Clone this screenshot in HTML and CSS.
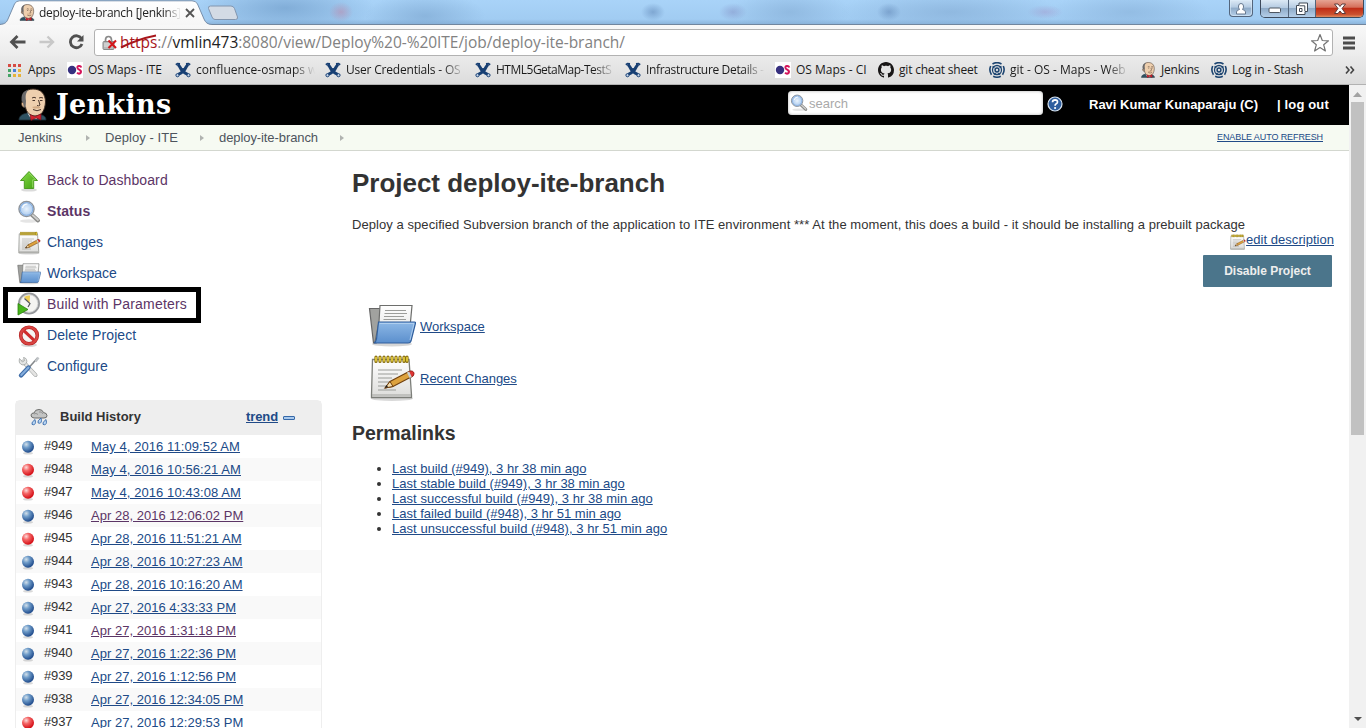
FILE: index.html
```html
<!DOCTYPE html>
<html lang="en">
<head>
<meta charset="utf-8">
<title>deploy-ite-branch [Jenkins]</title>
<link rel="stylesheet" href="styles.css">
</head>
<body>
<svg class="defs" width="0" height="0">
  <defs>
    <linearGradient id="gTab" x1="0" y1="0" x2="0" y2="1"><stop offset="0" stop-color="#fff"/><stop offset="1" stop-color="#f6f6f6"/></linearGradient>
    <radialGradient id="gBlue" cx=".35" cy=".3" r=".7"><stop offset="0" stop-color="#d3e0ea"/><stop offset=".4" stop-color="#6f9cc9"/><stop offset="1" stop-color="#1f4b8c"/></radialGradient>
    <radialGradient id="gRed" cx=".35" cy=".3" r=".7"><stop offset="0" stop-color="#fbdcdc"/><stop offset=".4" stop-color="#f46666"/><stop offset="1" stop-color="#d40c14"/></radialGradient>
    <radialGradient id="gLens"><stop offset="0" stop-color="#e9f3fd"/><stop offset="1" stop-color="#a3c5ec"/></radialGradient>
    <linearGradient id="gGreen" x1="0" y1="0" x2="1" y2="1"><stop offset="0" stop-color="#8ade4a"/><stop offset="1" stop-color="#3f9f10"/></linearGradient>
    <linearGradient id="gFolder" x1="0" y1="0" x2="0" y2="1"><stop offset="0" stop-color="#8db8e6"/><stop offset="1" stop-color="#5b8fcd"/></linearGradient>
    <linearGradient id="gPaper" x1="0" y1="0" x2="0" y2="1"><stop offset="0" stop-color="#fff"/><stop offset="1" stop-color="#dcdcda"/></linearGradient>
  </defs>
  <symbol id="butler" viewBox="0 0 29 33">
    <path d="M1 32C1 28 4 26 9 25L20 26C25 27 28 28 28 32Z" fill="#2f5262" stroke="#1a2b33" stroke-width=".8"/>
    <path d="M9 24L13 31H19L21 24Z" fill="#fff"/>
    <path d="M5 14C3 6 8 1 15 1C23 1 27.500 6 27.500 14C27 22 24 28 17 28C12 28 8 24 7.500 19C5 19 3.500 16 5 14Z" fill="#eecfae" stroke="#3a2a20"/>
    <path d="M4 15C2.500 6 5 3 11 1.500C8 4 7 7 8 13L7.500 20C5 19 3.500 18 4 15Z" fill="#6b6a6b"/>
    <path d="M5 14.500C3 13 2.500 18 6 19.500" fill="#e0b890" stroke="#3a2a20" stroke-width=".7"/>
    <path d="M14 10q2-1.500 4 0M21 10q2-1 4 0M14.500 12.500h2.500M22 12.500h2.500M20.500 12l1.500 5q-1.500 1.500-3 .5M15 21.500q4 2.500 8 0" fill="none" stroke="#49352b"/>
    <path d="M14 19q4.500-1.500 9 0l-2 1.500h-5Z" fill="#d2ab85"/>
    <path d="M12 26.500L17 28.500L23 26V32L18 30L13 32.500Z" fill="#d4232e" stroke="#701018" stroke-width=".7"/>
  </symbol>
  <symbol id="glass" viewBox="0 0 24 24">
    <ellipse cx="12" cy="21" rx="9" ry="1.800" fill="#000" opacity=".1"/>
    <path d="M14.500 14.500L21 20.500" stroke="#8a8a88" stroke-width="4" stroke-linecap="round"/>
    <path d="M15.500 15L21 20" stroke="#cfcfcd" stroke-width="1.800" stroke-linecap="round"/>
    <circle cx="9.500" cy="9" r="7.600" fill="url(#gLens)" stroke="#8d9298" stroke-width="1.300"/>
    <circle cx="9.500" cy="9" r="6.300" fill="none" stroke="#86aee0" stroke-width="1"/>
    <path d="M5.500 8q1-4 5-4" fill="none" stroke="#fff" stroke-width="1.200"/>
  </symbol>
  <symbol id="notepad" viewBox="0 0 48 48">
    <ellipse cx="24" cy="44.500" rx="21" ry="2.500" fill="#000" opacity=".15"/>
    <path d="M4.500 5.500H41L43.500 41V43.500H3.500V41Z" fill="url(#gPaper)" stroke="#7c7e79" stroke-width="1.300"/>
    <path d="M4 41H43" stroke="#a2a39f"/>
    <path d="M10 16H34M10 20H30M10 24H24M10 28H30M10 32H22M10 36H28" stroke="#9a9b98" stroke-width="1.100"/>
    <path d="M8 3V7.500M12 3V7.500M16 3V7.500M20 3V7.500M24 3V7.500M28 3V7.500M32 3V7.500M36 3V7.500M39 3V7.500" stroke="#8a7010" stroke-width="3.200" stroke-linecap="round"/>
    <path d="M8 3.500V7M12 3.500V7M16 3.500V7M20 3.500V7M24 3.500V7M28 3.500V7M32 3.500V7M36 3.500V7M39 3.500V7" stroke="#edd540" stroke-width="1.600" stroke-linecap="round"/>
    <path d="M17 34L22 27.500L41 17.500C45 16.500 47 20 44 22.500L25 32.500Z" fill="#dda23e" stroke="#70400e" stroke-width="1.100"/>
    <path d="M17 34L22 27.500L25 32.500Z" fill="#f5deb0" stroke="#70400e"/>
    <path d="M17 34l3-1-1.500-2Z" fill="#222"/>
    <path d="M41 17.500C45 15.500 48 19.500 44.500 22.300L43 23Z" fill="#df3433" stroke="#951919" stroke-width=".8"/>
    <path d="M39 18.500l2.200-1.100 2.600 5.500-2.200 1.100Z" fill="#ccd0d1"/>
  </symbol>
  <symbol id="folder" viewBox="0 0 48 48">
    <ellipse cx="24" cy="42" rx="20" ry="2.500" fill="#000" opacity=".16"/>
    <path d="M1.500 6.500H12L14 9H34V30L8 41H5.500Z" fill="#a1a29f" stroke="#666" stroke-width="1.200"/>
    <path d="M12 3.500H44L42 25L30 40H7L11 20Z" fill="url(#gPaper)" stroke="#6d6e6c" stroke-width="1.200"/>
    <path d="M17 8.500H38M16.500 11.500H39M16 14.500H36M15.500 17.500H38" stroke="#9c9d9a" stroke-width="1.100"/>
    <path d="M10.500 20H46.500C47.500 20 47.600 20.500 47.400 21.500L43 39Q42.500 41 40 41H6Q8 40 8.500 37Z" fill="url(#gFolder)" stroke="#315f9d" stroke-width="1.200"/>
    <path d="M11.800 21.500H46L42 38" fill="none" stroke="#b9d4f0" stroke-width=".8"/>
  </symbol>
  <symbol id="up" viewBox="0 0 24 24">
    <ellipse cx="12" cy="21" rx="8" ry="1.600" fill="#000" opacity=".14"/>
    <path d="M12 2.500L20.500 11.500H16.700V19.500H7.300V11.500H3.500Z" fill="url(#gGreen)" stroke="#4c9c22" stroke-linejoin="round"/>
    <path d="M12 4L18.500 10.800H15.700V18.500" fill="none" stroke="#a7e67a" stroke-width=".7"/>
  </symbol>
  <symbol id="clock" viewBox="0 0 24 24">
    <circle cx="12" cy="11.500" r="10" fill="#f4f4f2" stroke="#96989c" stroke-width="2"/>
    <circle cx="12" cy="11.500" r="8.800" fill="none" stroke="#d0d2d4" stroke-width=".9"/>
    <path d="M12.500 11.500L7 5Q9.500 3 13 3.500Z" fill="#ebcc55"/>
    <path d="M7.500 6.500L13 11.500L11 15" fill="none" stroke="#54575b" stroke-width="1.200"/>
    <path d="M1 11.500L11 17.500L1 23Z" fill="#47b51c" stroke="#2c820e" stroke-width=".8"/>
  </symbol>
  <symbol id="stop" viewBox="0 0 24 24">
    <ellipse cx="12" cy="21" rx="8" ry="2" fill="#000" opacity=".15"/>
    <circle cx="12" cy="11.500" r="8.300" fill="#f5f4f2" stroke="#b52525" stroke-width="3.600"/>
    <path d="M6 5.800L18 17.200" stroke="#cf2c2c" stroke-width="3.200"/>
    <circle cx="12" cy="11.500" r="8.300" fill="none" stroke="#d94442" stroke-width="2.200"/>
  </symbol>
  <symbol id="tools" viewBox="0 0 24 24">
    <path d="M6 6.500L18.500 20" stroke="#a0a3a2" stroke-width="4" stroke-linecap="round"/>
    <path d="M6 6.500L18.500 20" stroke="#e4e4e3" stroke-width="2.600" stroke-linecap="round"/>
    <path d="M2.500 3.500Q1 9 6 10Q11 9 9.500 4.500Q8.500 2.500 6.500 2.500L7.500 5.500L5.500 7Z" fill="#e4e5e4" stroke="#a0a3a2" stroke-width=".8"/>
    <path d="M20.500 3L12 12.500" stroke="#85898c" stroke-width="1.600"/>
    <path d="M21.500 2.500L18.500 6.500" stroke="#c0c4c7" stroke-width="2.400"/>
    <path d="M11.500 12.500L4 20.500" stroke="#3f6da8" stroke-width="4.400" stroke-linecap="round"/>
    <path d="M11.500 12.500L4.300 20" stroke="#85aedd" stroke-width="2" stroke-linecap="round"/>
  </symbol>
  <symbol id="rain" viewBox="0 0 18 18">
    <path d="M4 10Q.8 9.500 1 7Q1.500 4.800 4 5Q5 1.300 9 1.500Q12.500 1.500 13.500 4.500Q17 5 17 7.700Q17 10 14 10Z" fill="#c3c4c3" stroke="#6c6d6b"/>
    <path d="M4 6q2-1.500 4 .5M9 4q3-1 4 2" fill="none" stroke="#888" stroke-width=".8"/>
    <g fill="#b8d5f2" stroke="#3569aa" stroke-width=".9"><path d="M5 11.500q-4 3-3 4.800q3 1.500 3.500-2z"/><path d="M11 10q-4 3-3 4.800q3 1.500 3.500-2z"/><path d="M16 11.500q-4 3-3 4.800q3 1.500 3.500-2z"/></g>
  </symbol>
  <symbol id="ball-b" viewBox="0 0 14 15"><ellipse cx="7" cy="13.300" rx="5" ry="1.200" opacity=".15"/><circle cx="7" cy="6.800" r="6" fill="url(#gBlue)"/></symbol>
  <symbol id="ball-r" viewBox="0 0 14 15"><ellipse cx="7" cy="13.300" rx="5" ry="1.200" opacity=".15"/><circle cx="7" cy="6.800" r="6" fill="url(#gRed)"/></symbol>
  <symbol id="os" viewBox="0 0 16 16"><path fill="#fff" d="M0 0h16v16H0z"/><circle cx="5" cy="8" r="4.200" fill="#37307f"/><path d="M14.300 5.500Q13.700 3.800 12 4Q10 4.300 10.500 6Q11 7.300 12.500 7.800Q14.600 8.800 13.700 10.800Q12 12.500 10 10.800" fill="none" stroke="#d4145a" stroke-width="2"/></symbol>
  <symbol id="conf" viewBox="0 0 16 16"><path d="M3 2.500Q4.500 4 6 7T13 12.500M13 2.500Q11.500 4 10 7T3 12.500" fill="none" stroke="#173f73" stroke-width="3"/><path d="M.8 2.700L2.500 1.700L5 2M15.200 2.700L13.500 1.700L11 2" fill="none" stroke="#173f73" stroke-width="1.800"/><path d="M5.500 5q2.500 2.500 5 0L9.500 10H6.500z" fill="#173f73"/><circle cx="2.500" cy="13.200" r="1.600" fill="#c4d4e8" stroke="#173f73"/><circle cx="13.500" cy="13.200" r="1.600" fill="#c4d4e8" stroke="#173f73"/></symbol>
  <symbol id="git" viewBox="0 0 16 16"><path fill="#181616" fill-rule="evenodd" d="M8 0C3.580 0 0 3.580 0 8c0 3.540 2.290 6.530 5.470 7.590.4.070.55-.17.55-.38 0-.19-.01-.82-.01-1.490-2.010.37-2.530-.49-2.690-.94-.09-.23-.48-.94-.82-1.130-.28-.15-.68-.52-.01-.53.630-.01 1.080.58 1.230.82.720 1.210 1.870.87 2.330.66.070-.52.280-.87.510-1.070-1.780-.2-3.640-.89-3.640-3.950 0-.87.310-1.590.82-2.150-.08-.2-.36-1.020.08-2.120 0 0 .67-.21 2.200.82.640-.18 1.320-.27 2-.27s1.360.09 2 .27c1.530-1.040 2.200-.82 2.200-.82.440 1.100.16 1.920.08 2.120.51.560.82 1.270.82 2.150 0 3.070-1.870 3.750-3.650 3.950.29.250.54.730.54 1.480 0 1.070-.01 1.930-.01 2.200 0 .21.150.46.550.38A8.010 8.010 0 0 0 16 8c0-4.420-3.580-8-8-8z"/></symbol>
  <symbol id="stash" viewBox="0 0 16 16"><g fill="none" stroke="#1c4470" stroke-width="1.600"><path d="M3.500 2Q8-.8 12.500 2M14.300 4Q16.300 8.500 13.500 12.700M11.800 14.200Q8 16.200 4.200 14.200M2.500 12.700Q-.3 8.500 1.700 4"/><circle cx="8" cy="8" r="4.500" stroke-width="1.300"/><circle cx="8" cy="8" r="1.900" stroke-width="1.500"/><path d="M3.500 4.500L5.500 5.500M12.500 4.500L10.500 5.500M5 12.500L6.500 11M11 12.500L9.500 11"/></g></symbol>
</svg>

<div class="titlebar">
  <div class="tab">
    <svg class="tab-shape" width="214" height="25"><path d="M0 25V24.500C5 24 6.500 22.500 8 19L14.500 4Q16 .8 19.500.8H192Q196 .8 197.500 4L204 19Q206 24.500 212 24.500V25Z" fill="url(#gTab)"/><path d="M0 24.500C5 24 6.500 22.500 8 19L14.500 4Q16 .8 19.500.8H192Q196 .8 197.500 4L204 19Q206 24.500 212 24.500" fill="none" stroke="#6d84a0" stroke-width=".9"/></svg>
    <svg class="fav" width="16" height="17"><use href="#butler"/></svg>
    <span class="tab-title">deploy-ite-branch [Jenkins]</span>
    <svg class="tab-x" width="10" height="10"><path d="M1 1L9 9M9 1L1 9" stroke="#555" stroke-width="1.800"/></svg>
  </div>
  <svg class="newtab" width="33" height="16"><path d="M4.500 1H25Q27.500 1 28.500 3.500L31.500 12Q32 14.500 29.500 14.500H9Q7 14.500 6 12L2.500 3.500Q2 1 4.500 1Z" fill="#d3dbe5" stroke="#8296af"/></svg>
  <div class="win">
    <div class="wbtn user"><svg width="12" height="13"><path d="M1.500 12V10Q1.500 8 4.500 7.500Q3.300 6 3.500 4Q3.800 1.500 6 1.500Q8.300 1.500 8.500 4Q8.700 6 7.500 7.500Q10.500 8 10.500 10V12Z" fill="#fff" stroke="#66788f"/></svg></div>
    <div class="wgroup">
      <div class="wbtn min"><svg width="14" height="8"><rect x="1" y="2" width="11.500" height="4.500" rx="1" fill="#fff" stroke="#4e5661"/></svg></div>
      <div class="wbtn max"><svg width="14" height="14"><path d="M4 1H12.500V9.500H10V12.500H1.500V3.500H4Z" fill="#fff" stroke="#414a56"/><path d="M9.800 9V3.800H4.500M4.500 6.500h2.500v3H4.500z" fill="none" stroke="#414a56"/></svg></div>
      <div class="wbtn close"><svg width="14" height="12"><path d="M1.500 1H5L7 3.500L9 1H12.500L9 5.500L12.500 10.500H9L7 8L5 10.500H1.500L5 5.500Z" fill="#fff" stroke="#5c3a3a"/></svg></div>
    </div>
  </div>
</div>

<div class="toolbar">
  <svg class="nav" width="80" height="16"><g fill="none" stroke-width="2.800"><path d="M16.500 8H3M8.500 2L2.500 8L8.500 14" stroke="#505050"/><path d="M30.500 8H44M38.500 2.500L44 8L38.500 13.500" stroke="#c8c8c8" stroke-width="2.400"/><path d="M72.500 4.500A6 6 0 1 0 73 10" stroke="#505050"/></g><path d="M74.500 1V7.500H68Z" fill="#505050"/></svg>
  <div class="omni">
    <svg class="lock" width="16" height="16"><path d="M3.500 7V5Q3.500 1.500 6.500 1.500Q9.500 1.500 9.500 5V7" fill="none" stroke="#8a8a8a" stroke-width="1.700"/><rect x="1" y="6.500" width="11" height="8" rx="1" fill="#b9b9b9" stroke="#888"/><path d="M2 9h8M2 11h8" stroke="#e5e5e5"/><path d="M6.500 5.500L14 13M14 5.500L6.500 13" stroke="#d3171b" stroke-width="2.100"/></svg>
    <span class="url"><span class="https">https<svg width="38" height="15"><path d="M1 13.500Q18 5 36 1.500" stroke="#a8161b" stroke-width="2" fill="none"/></svg></span>://<b>vmlin473</b>:8080/view/Deploy%20-%20ITE/job/deploy-ite-branch/</span>
    <svg class="star" width="20" height="20"><path d="M10 1.500L12.300 7.500L18.500 7.800L13.700 11.800L15.400 18L10 14.500L4.600 18L6.300 11.800L1.500 7.800L7.700 7.500Z" fill="#fff" stroke="#747474" stroke-width="1.200" stroke-linejoin="round"/></svg>
  </div>
  <svg class="menu" width="14" height="14"><path d="M1 2H13M1 7H13M1 12H13" stroke="#4c4c4c" stroke-width="3"/></svg>
</div>

<div class="bookmarks">
  <span class="bm tight"><svg width="14" height="14"><g><path fill="#d64b43" d="M0 0h3v3H0zM5 0h3v3H5zM10 0h3v3h-3z"/><path fill="#45a466" d="M0 5h3v3H0zM0 10h3v3H0z"/><path fill="#477fd8" d="M5 5h3v3H5z"/><path fill="#e6b33b" d="M10 5h3v3h-3zM5 10h3v3H5zM10 10h3v3h-3z"/></g></svg>Apps</span>
  <span class="bm tight"><svg><use href="#os"/></svg>OS Maps - ITE</span>
  <span class="bm"><svg><use href="#conf"/></svg><span class="clip">confluence-osmaps w</span></span>
  <span class="bm tight"><svg><use href="#conf"/></svg><span class="clip">User Credentials - OS</span></span>
  <span class="bm tighter"><svg><use href="#conf"/></svg><span class="clip">HTML5GetaMap-TestS</span></span>
  <span class="bm tight3"><svg><use href="#conf"/></svg><span class="clip">Infrastructure Details -</span></span>
  <span class="bm"><svg><use href="#os"/></svg>OS Maps - CI</span>
  <span class="bm tight"><svg><use href="#git"/></svg>git cheat sheet</span>
  <span class="bm"><svg><use href="#stash"/></svg><span class="clip">git - OS - Maps - Web</span></span>
  <span class="bm tight"><svg><use href="#butler"/></svg>Jenkins</span>
  <span class="bm tight"><svg><use href="#stash"/></svg>Log in - Stash</span>
  <svg class="more" width="10" height="8"><path d="M1 .5L4 4L1 7.500M5.500 .5L8.500 4L5.500 7.500" fill="none" stroke="#444" stroke-width="1.600"/></svg>
</div>

<div class="view">
  <div class="page">
    <header class="head">
      <svg class="logo" width="29" height="33"><use href="#butler"/></svg>
      <span class="brand">Jenkins</span>
      <div class="search"><svg width="18" height="18"><use href="#glass"/></svg><span>search</span></div>
      <svg class="help" width="16" height="16"><circle cx="8" cy="8" r="7" fill="#2f5f9f" stroke="#d9e5f2" stroke-width="1.200"/><path d="M5.500 6.300Q5.600 3.900 8.100 3.900Q10.500 4 10.500 6Q10.500 7.300 9 8Q8.100 8.500 8.100 9.700" fill="none" stroke="#fff" stroke-width="1.700"/><circle cx="8.100" cy="12" r="1.100" fill="#fff"/></svg>
      <b class="who">Ravi Kumar Kunaparaju (C)</b>
      <b class="out">| log out</b>
    </header>
    <nav class="crumbs">
      <span class="c1">Jenkins</span><i></i><span class="c2">Deploy - ITE</span><i></i><span class="c3">deploy-ite-branch</span><i></i>
      <a class="auto">ENABLE AUTO REFRESH</a>
    </nav>
    <div class="cols">
      <aside class="side">
        <ul class="tasks">
          <li class="v"><svg><use href="#up"/></svg>Back to Dashboard</li>
          <li class="v on"><svg><use href="#glass"/></svg>Status</li>
          <li class="plain"><svg><use href="#notepad"/></svg>Changes</li>
          <li class="plain"><svg><use href="#folder"/></svg>Workspace</li>
          <li class="v boxed"><svg><use href="#clock"/></svg>Build with Parameters</li>
          <li><svg><use href="#stop"/></svg>Delete Project</li>
          <li class="plain"><svg><use href="#tools"/></svg>Configure</li>
        </ul>
        <section class="history">
          <div class="hist-head"><svg width="18" height="18"><use href="#rain"/></svg><b class="ht">Build History</b><a class="trend">trend</a><i class="minus"></i></div>
          <div class="row may"><svg><use href="#ball-b"/></svg><span>#949</span><a>May 4, 2016 11:09:52 AM</a></div>
          <div class="row may"><svg><use href="#ball-r"/></svg><span>#948</span><a>May 4, 2016 10:56:21 AM</a></div>
          <div class="row may"><svg><use href="#ball-r"/></svg><span>#947</span><a>May 4, 2016 10:43:08 AM</a></div>
          <div class="row"><svg><use href="#ball-b"/></svg><span>#946</span><a class="v">Apr 28, 2016 12:06:02 PM</a></div>
          <div class="row"><svg><use href="#ball-r"/></svg><span>#945</span><a>Apr 28, 2016 11:51:21 AM</a></div>
          <div class="row"><svg><use href="#ball-b"/></svg><span>#944</span><a>Apr 28, 2016 10:27:23 AM</a></div>
          <div class="row"><svg><use href="#ball-b"/></svg><span>#943</span><a>Apr 28, 2016 10:16:20 AM</a></div>
          <div class="row"><svg><use href="#ball-b"/></svg><span>#942</span><a>Apr 27, 2016 4:33:33 PM</a></div>
          <div class="row"><svg><use href="#ball-b"/></svg><span>#941</span><a class="v">Apr 27, 2016 1:31:18 PM</a></div>
          <div class="row"><svg><use href="#ball-b"/></svg><span>#940</span><a>Apr 27, 2016 1:22:36 PM</a></div>
          <div class="row"><svg><use href="#ball-b"/></svg><span>#939</span><a>Apr 27, 2016 1:12:56 PM</a></div>
          <div class="row"><svg><use href="#ball-b"/></svg><span>#938</span><a>Apr 27, 2016 12:34:05 PM</a></div>
          <div class="row"><svg><use href="#ball-r"/></svg><span>#937</span><a>Apr 27, 2016 12:29:53 PM</a></div>
        </section>
      </aside>
      <main class="main">
        <h1>Project deploy-ite-branch</h1>
        <p class="desc">Deploy a specified Subversion branch of the application to ITE environment *** At the moment, this does a build - it should be installing a prebuilt package</p>
        <div class="edit"><svg width="16" height="16" viewBox="2 0 46 46"><use href="#notepad" width="48" height="48"/></svg><a>edit description</a></div>
        <div class="actions"><span class="btn">Disable Project</span></div>
        <div class="big"><svg width="48" height="48"><use href="#folder"/></svg><a>Workspace</a></div>
        <div class="big"><svg width="48" height="48"><use href="#notepad"/></svg><a>Recent Changes</a></div>
        <h2>Permalinks</h2>
        <ul class="perma">
          <li><a>Last build (#949), 3 hr 38 min ago</a></li>
          <li><a>Last stable build (#949), 3 hr 38 min ago</a></li>
          <li><a class="wide">Last successful build (#949), 3 hr 38 min ago</a></li>
          <li><a>Last failed build (#948), 3 hr 51 min ago</a></li>
          <li><a class="wide">Last unsuccessful build (#948), 3 hr 51 min ago</a></li>
        </ul>
      </main>
    </div>
  </div>
  <div class="scroll"><svg class="su" width="9" height="5"><path d="M0 5L4.500 0L9 5Z" fill="#a3a3a3"/></svg><div class="thumb"></div><svg class="sd" width="8" height="4"><path d="M0 0H8L4 4Z" fill="#505050"/></svg></div>
</div>
</body>
</html>
```
FILE: styles.css
```css
* { box-sizing: border-box; }
body { margin: 0; width: 1366px; height: 728px; overflow: hidden; display: flex; flex-direction: column; background: #fff; font: 13px/15px "Liberation Sans", Arial, sans-serif; color: #333; }
svg { display: block; flex: none; }
.defs { position: absolute; }
a { color: #204a87; text-decoration: underline; }
ul { list-style: none; margin: 0; padding: 0; }

.titlebar { height: 25px; flex: none; display: flex; border-bottom: 1px solid #71869e;
  background:
    radial-gradient(ellipse 12px 10px at 341px 12px, #b98fb299, transparent),
    radial-gradient(ellipse 90px 26px at 285px 8px, #6f9cc9aa, transparent),
    radial-gradient(ellipse 60px 24px at 425px 16px, #7fa9d2aa, transparent),
    radial-gradient(ellipse 12px 9px at 653px 12px, #6c93c1aa, transparent),
    radial-gradient(ellipse 14px 9px at 733px 12px, #8b9fd0aa, transparent),
    radial-gradient(ellipse 60px 24px at 790px 12px, #84acd499, transparent),
    radial-gradient(ellipse 12px 9px at 889px 12px, #6c93c1aa, transparent),
    radial-gradient(ellipse 110px 24px at 950px 12px, #86aed6aa, transparent),
    radial-gradient(ellipse 18px 7px at 1045px 12px, #a6a8d8aa, transparent),
    radial-gradient(ellipse 80px 22px at 1130px 12px, #8bb4dcaa, transparent),
    linear-gradient(#a9d3f8, #a1ccf2 80%, #8cb5dc); }
.tab { position: relative; width: 205px; height: 25px; display: flex; align-items: flex-start; padding-left: 19px; }
.tab-shape { position: absolute; left: 0; top: 0; }
.fav { position: relative; margin-top: 4px; }
.tab-title { position: relative; width: 142px; margin: 5px 0 0 4px; white-space: nowrap; font: 12px/16px "Open Sans", sans-serif; letter-spacing: -.29px; color: #222; -webkit-mask-image: linear-gradient(90deg, #000 88%, transparent); mask-image: linear-gradient(90deg, #000 88%, transparent); }
.tab-x { position: relative; margin: 8px 0 0 4px; }
.newtab { margin: 5px 0 0 1px; }
.win { margin-left: auto; margin-right: 2px; display: flex; gap: 7px; height: 18px; }
.wbtn { height: 17px; display: flex; justify-content: center; align-items: center; background: linear-gradient(#dce9f5, #b5cbe2 45%, #8fabc8 50%, #b4cee8); }
.user { width: 24px; border: 1px solid #53657c; border-top: 0; border-radius: 0 0 4px 4px; box-shadow: inset 0 0 0 1px #dcecfa99; }
.wgroup { display: flex; height: 18px; border: 1px solid #3d4a5c; border-top: 0; border-radius: 0 0 5px 5px; overflow: hidden; }
.min { width: 28px; padding-top: 2px; border-right: 1px solid #53657c; }
.max { width: 27px; border-right: 1px solid #53657c; }
.close { width: 47px; background: linear-gradient(#e6a493, #d5705b 42%, #c02e17 50%, #cb5130 85%, #e28d60); }

.toolbar { height: 31px; flex: none; display: flex; align-items: center; padding: 4px 10px 0 9px; background: linear-gradient(#f8f8f8, #ececec); }
.nav { margin-top: -1px; }
.omni { margin-left: 5px; width: 1240px; height: 27px; background: #fff; border: 1px solid #b2b2b2; border-radius: 3px; display: flex; align-items: center; }
.lock { margin-left: 7px; }
.url { margin: -2px 0 0 2px; flex: 1; white-space: nowrap; font: 15.500px/22px "Open Sans", sans-serif; letter-spacing: -.04px; color: #828282; }
.url b { font-weight: 400; color: #222; }
.https { position: relative; color: #a8161b; }
.https svg { position: absolute; left: 0; top: 3px; }
.star { margin-right: 2px; }
.menu { margin-left: 9px; }
.bookmarks { height: 29px; flex: none; display: grid; grid-template-columns: 59px 108px 150px 150px 150px 150px 103px 111px 151px 71px 134px 12px; padding: 0 8px; align-items: center; background: linear-gradient(#ebebeb, #dcdcdc); border-bottom: 1px solid #b2b2b2; color: #1b1b1b; }
.bm { display: flex; align-items: center; white-space: nowrap; font: 12px/16px "Open Sans", sans-serif; gap: 5px; }
.bm svg { width: 16px; height: 16px; }
.bm:first-child { gap: 4px; }
.bm:first-child svg { height: 13px; }
.tight { letter-spacing: -.2px; }
.tight3 { letter-spacing: -.34px; }
.tighter { letter-spacing: -.5px; }
.clip { width: 119px; -webkit-mask-image: linear-gradient(90deg, #000 82%, transparent); mask-image: linear-gradient(90deg, #000 82%, transparent); }

.view { flex: 1; min-height: 0; display: flex; }
.page { width: 1349px; overflow: hidden; }
.scroll { width: 17px; background: #f1f1f1; display: flex; flex-direction: column; align-items: center; }
.su { margin-top: 7px; }
.thumb { width: 13px; height: 333px; margin: 5px 0 0 0; background: #c1c1c1; }
.sd { margin-top: auto; margin-bottom: 7px; }
.head { height: 40px; background: #000; color: #fff; display: flex; padding-left: 18px; }
.logo { margin-top: 3px; }
.brand { margin: 4px 0 0 9px; width: 732px; font: bold 27px/32px "DejaVu Serif", serif; letter-spacing: .3px; }
.search { margin-top: 6px; width: 255px; height: 24px; border-radius: 4px; background: #fff; display: flex; align-items: center; padding-left: 2px; gap: 1px; color: #a9a9a9; box-shadow: inset 0 0 3px #aaa; }
.help { margin: 11px 0 0 4px; }
.who { margin: 12px 0 0 26px; width: 188px; white-space: nowrap; }
.out { margin-top: 12px; white-space: nowrap; letter-spacing: .15px; }
.crumbs { height: 26px; background: #f6faf2; border-bottom: 1px solid #d3d7cf; display: flex; align-items: center; padding-left: 18px; color: #4d545d; white-space: nowrap; }
.crumbs i { width: 0; border: 3.500px solid transparent; border-left: 4px solid #b0b3b0; border-right: 0; margin: 1px 15px 0 22px; }
.c1 { width: 46px; }
.c2 { width: 73px; letter-spacing: .06px; }
.c3 { width: 99px; letter-spacing: -.085px; }
.auto { margin-left: auto; margin-right: 26px; font-size: 9px; letter-spacing: -.1px; }
.cols { display: flex; }
.side { width: 352px; flex: none; padding: 14px 0 0 15px; }
.tasks li { height: 31px; display: flex; align-items: center; gap: 6px; padding-left: 2px; font-size: 14px; letter-spacing: .1px; color: #204a87; white-space: nowrap; }
.tasks li.plain { letter-spacing: 0; }
.tasks svg { width: 24px; height: 24px; }
.tasks li.v, .row a.v { color: #5c3566; }
.tasks .on { font-weight: bold; }
.tasks li.boxed { width: 198px; height: 36px; margin: -2px 0 -3px -12px; padding: 0 0 2px 9px; border: 5px solid #000; letter-spacing: .18px; }
.history { margin-top: 18px; width: 307px; border: 1px solid #eee; border-radius: 5px 5px 0 0; }
.hist-head { height: 34px; background: #eee; display: flex; align-items: center; padding: 0 0 4px 14px; }
.hist-head svg { margin-top: 2px; }
.ht { margin-left: 12px; width: 186px; }
.trend { font-weight: bold; letter-spacing: -.1px; }
.minus { margin: 3px 0 0 5px; width: 12px; height: 4px; border: 1px solid #3568a8; background: #a9c9ec; border-radius: 1px; }
.row { height: 23px; display: flex; align-items: flex-start; padding-left: 5px; white-space: nowrap; }
.row:nth-child(odd) { background: #f9f9f9; }
.row svg { width: 14px; height: 15px; margin-top: 5px; }
.row span { width: 47px; margin: 3px 0 0 9px; letter-spacing: -.15px; }
.row a { margin-top: 4px; letter-spacing: .02px; }
.may a { letter-spacing: .08px; }
.main { width: 997px; flex: none; }
h1 { margin: 17px 0 0; font-size: 26px; line-height: 30px; letter-spacing: -.02px; }
.desc { margin: 19px 0 0; white-space: nowrap; letter-spacing: .064px; }
.edit { display: flex; justify-content: flex-end; padding-right: 15px; letter-spacing: .03px; }
.edit svg { margin-top: 2px; }
.actions { display: flex; justify-content: flex-end; padding-right: 17px; margin-top: 5px; }
.btn { width: 129px; height: 32px; background: #4b758b; color: #eee; font-weight: bold; font-size: 12px; display: flex; align-items: center; justify-content: center; border-radius: 1px; }
.big { display: flex; align-items: center; height: 52px; padding-left: 16px; gap: 4px; }
.actions + .big { margin-top: 13px; }
h2 { margin: 17px 0 0; font-size: 19.500px; line-height: 24px; letter-spacing: -.05px; }
.perma { list-style: disc; margin: 16px 0 0; padding-left: 40px; }
.wide { letter-spacing: .045px; }
```
